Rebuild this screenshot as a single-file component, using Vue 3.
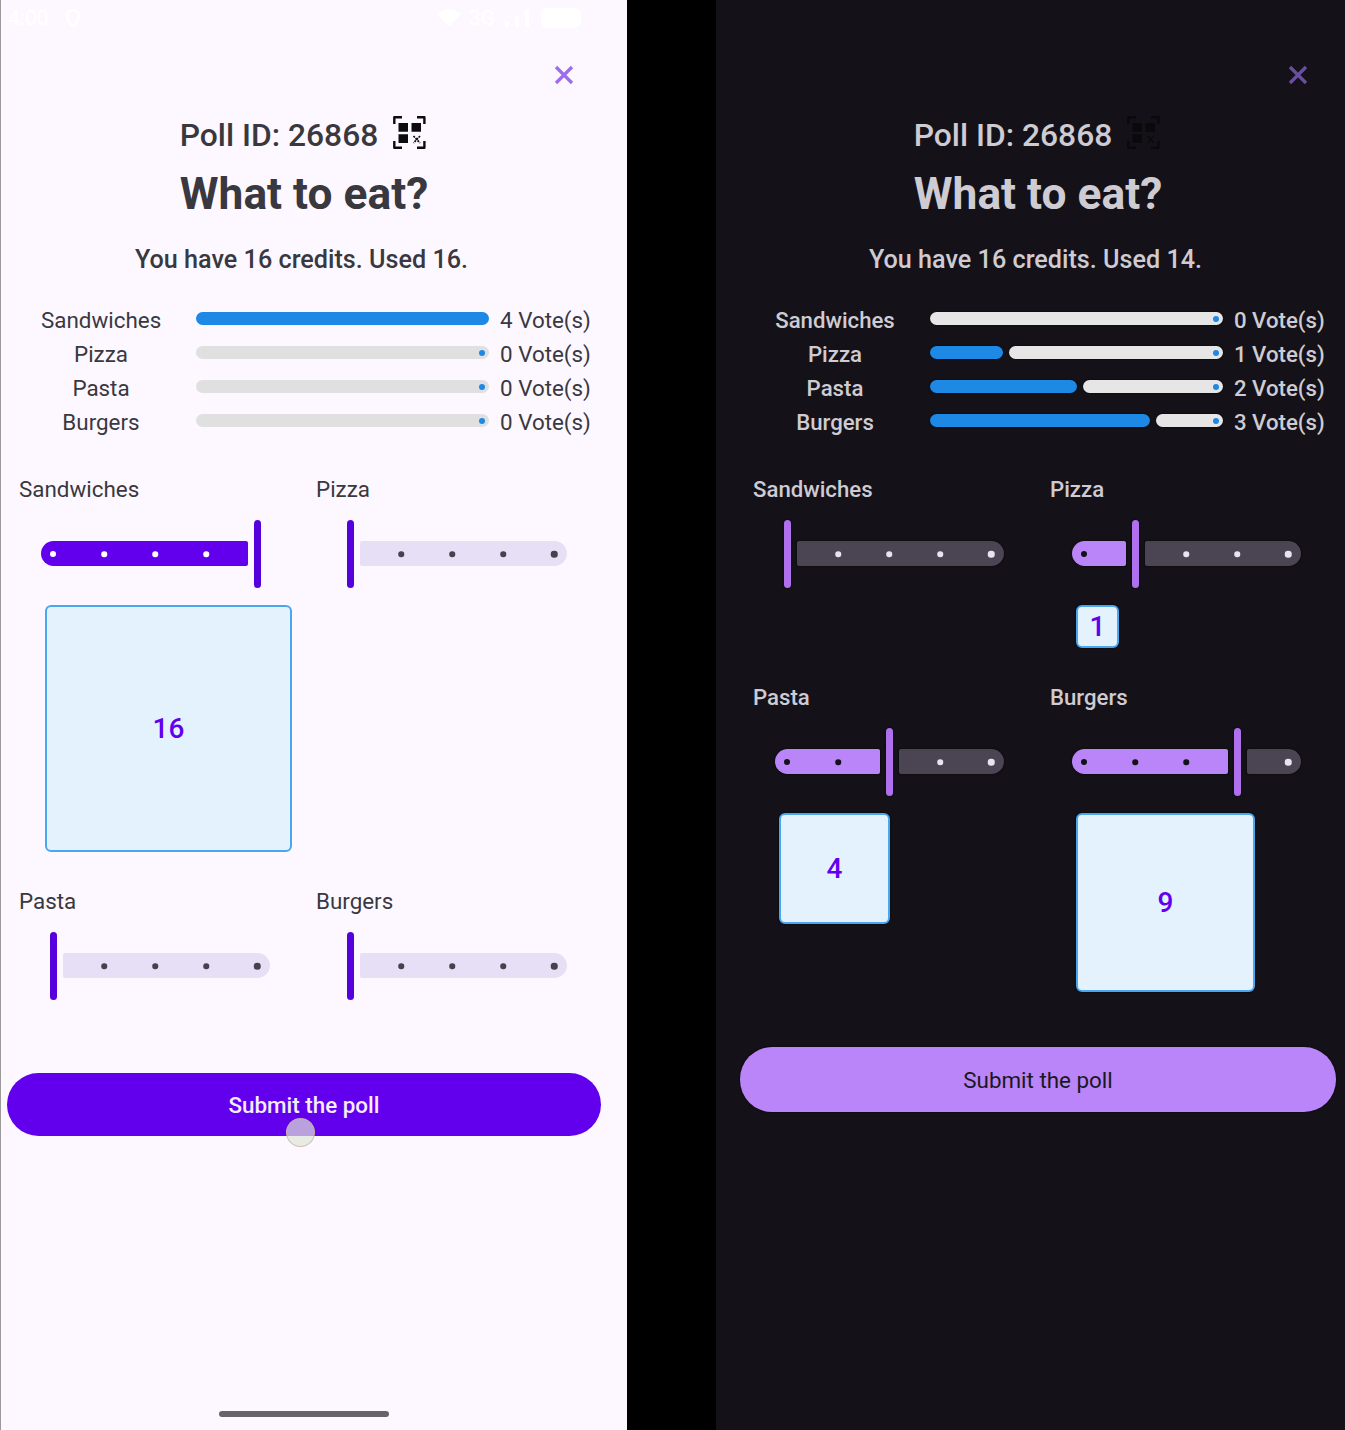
<script setup>
const choices = ['Sandwiches', 'Pizza', 'Pasta', 'Burgers']
const screens = [
  { theme: 'light', votes: [4, 0, 0, 0], chrome: true },
  { theme: 'dark', votes: [0, 1, 2, 3], chrome: false },
]
const usedCredits = (votes) => votes.reduce((sum, v) => sum + v * v, 0)
const boxSize = (v) => 68 * v - 25
const qrCorners = ['M1.3 8V1.3H9', 'M24 1.3h7.4V8', 'M1.3 25v6.7H9', 'M24 31.7h7.4V25']
</script>

<template>
  <div class="page">
    <section v-for="screen in screens" :key="screen.theme" class="screen" :class="screen.theme">
      <div v-if="screen.chrome" class="status">
        <span class="clock">4:00</span>
        <svg class="shield" viewBox="0 0 20 24" width="16" height="20">
          <path d="M10 2l7 3v6c0 5-3 8-7 11-4-3-7-6-7-11V5z" fill="none" stroke="currentColor" stroke-width="3" />
        </svg>
        <span class="status-right">
          <svg viewBox="0 0 24 18" width="24" height="18">
            <path d="M12 17L0 5c7-6 17-6 24 0z" fill="currentColor" />
          </svg>
          <span class="net">3G</span>
          <svg viewBox="0 0 30 20" width="30" height="20">
            <path d="M2 14h4v5H2zM12 8h4v11h-4zM22 1h4v18h-4z" fill="currentColor" />
          </svg>
          <span class="battery"></span>
        </span>
      </div>
      <div class="content">
        <header class="close-row">
          <svg class="close" viewBox="0 0 20 20" width="20" height="20">
            <path d="M2 2l16 16M18 2L2 18" fill="none" stroke="currentColor" stroke-width="3.2" />
          </svg>
        </header>
        <div class="poll-id">
          <span>Poll ID: 26868</span>
          <svg class="qr" viewBox="0 0 33 33" width="33" height="33">
            <path v-for="d in qrCorners" :key="d" :d="d" fill="none" stroke="currentColor" stroke-width="2.4" stroke-linejoin="round" />
            <path d="M5.5 7h9.5v8.7H5.5zM18.5 7H28v8.7h-9.5zM5.5 18.3h9.5V27H5.5z" fill="currentColor" />
            <path d="M20.5 20l6.5 7M27 20l-6.5 7" fill="none" stroke="currentColor" stroke-width="1.7" stroke-dasharray="2 1" />
          </svg>
        </div>
        <h1 class="title">What to eat?</h1>
        <p class="credits">You have 16 credits. Used {{ usedCredits(screen.votes) }}.</p>

        <ul class="results">
          <li v-for="(name, i) in choices" :key="name" class="result">
            <span class="result-name">{{ name }}</span>
            <span class="bar">
              <span v-if="screen.votes[i]" class="bar-fill" :style="{ width: screen.votes[i] * 73.25 + 'px' }"></span>
              <span v-if="screen.votes[i] < 4" class="bar-track"><i class="bar-stop"></i></span>
            </span>
            <span class="result-votes">{{ screen.votes[i] }} Vote(s)</span>
          </li>
        </ul>

        <div class="sliders">
          <div v-for="(name, i) in choices" :key="name" class="choice">
            <div class="choice-name">{{ name }}</div>
            <div class="slider">
              <span class="track-on" :class="{ empty: !screen.votes[i] }" :style="{ width: 2.5 + 51 * screen.votes[i] + 'px' }"></span>
              <span class="thumb"></span>
              <span v-if="screen.votes[i] < 4" class="track-off"></span>
              <template v-for="k in 5" :key="k">
                <i
                  v-if="k - 1 !== screen.votes[i]"
                  class="tick"
                  :class="{ on: k - 1 < screen.votes[i], end: k === 5, start: k === 1 }"
                  :style="{ left: 12 + 51 * (k - 1) + 'px' }"
                ></i>
              </template>
            </div>
            <div class="box-slot">
              <div
                v-if="screen.votes[i]"
                class="box"
                :style="{ width: boxSize(screen.votes[i]) + 'px', height: boxSize(screen.votes[i]) + 'px' }"
              >{{ screen.votes[i] * screen.votes[i] }}</div>
            </div>
          </div>
        </div>

        <button class="submit" type="button">
          Submit the poll
          <i v-if="screen.chrome" class="touch"></i>
        </button>
        <div v-if="screen.chrome" class="home"></div>
      </div>
    </section>
  </div>
</template>

<style>
html, body { margin: 0; background: #000; }
</style>

<style scoped>
.page {
  display: flex;
  justify-content: space-between;
  width: 1345px;
  height: 1430px;
  overflow: hidden;
  background: #000;
  font-family: Roboto, "Liberation Sans", sans-serif;
}
.screen {
  position: relative;
  display: flex;
  flex-direction: column;
  height: 1430px;
  box-sizing: border-box;
  background: var(--bg);
  color: var(--text);
}
.light {
  width: 627px;
  box-shadow: inset 1px 0 #9a9a9a;
  --bg: #fdf8ff;
  --text: #3a383f;
  --close: #9d6ce8;
  --qr: #0c0c0e;
  --bar-track: #e0e0e0;
  --thumb: #5600dc;
  --on: #6200ee;
  --off: #e7dff6;
  --tick-off: #45424e;
  --tick-on: #fff;
  --btn: #6200ee;
  --btn-text: #f6ecff;
  --btn-weight: 500;
  --btn-h: 63px;
  --btn-w: 594px;
  --btn-x: 7px;
  --btn-gap: 56px;
  --halo: transparent;
  --top: 26px;
  --label-weight: 400;
  --label-size: 22.4px;
}
.dark {
  width: 629px;
  padding-left: 18px;
  --bg: #141218;
  --text: #cfcbd3;
  --close: #6a4ea2;
  --qr: #0a090c;
  --bar-track: #e6e6e6;
  --thumb: #b070ee;
  --on: #b985f9;
  --off: #4a4453;
  --tick-off: #e8e3ee;
  --tick-on: #141218;
  --btn: #b985f9;
  --btn-text: #1b1720;
  --btn-weight: 400;
  --btn-h: 65px;
  --btn-w: 596px;
  --btn-x: 6px;
  --btn-gap: 55px;
  --halo: #000;
  --top: 62px;
  --label-weight: 500;
  --label-size: 22.2px;
}
.status {
  display: flex;
  align-items: center;
  height: 36px;
  padding: 0 46px 0 8px;
  color: #fff;
  font-size: 21px;
}
.shield { margin-left: 16px; }
.status-right { display: flex; align-items: center; gap: 8px; margin-left: auto; }
.battery { width: 40px; height: 20px; border-radius: 7px; background: #fff; }
.content {
  display: flex;
  flex: 1;
  flex-direction: column;
  width: 608px;
  padding-top: var(--top);
  min-height: 0;
}
.close-row { display: flex; justify-content: flex-end; height: 26px; padding-right: 34px; align-items: center; }
.close { color: var(--close); }
.poll-id {
  display: flex;
  align-items: center;
  justify-content: center;
  gap: 15px;
  height: 40px;
  margin: 27px 2px 0 0;
  font-size: 31.8px;
  font-weight: 500;
}
.qr { color: var(--qr); margin-top: -6px; }
.title {
  margin: 13px 0 0;
  height: 52px;
  font-size: 44.3px;
  line-height: 52px;
  font-weight: 700;
  text-align: center;
}
.credits {
  margin: 24px 5px 0 0;
  height: 32px;
  font-size: 25.2px;
  line-height: 32px;
  font-weight: 500;
  text-align: center;
}
.results { list-style: none; margin: 27px 0 0; padding: 0 0 0 41px; }
.result {
  display: flex;
  align-items: center;
  height: 34px;
  font-size: var(--label-size);
  font-weight: var(--label-weight);
}
.result-name { width: 120px; margin-right: 35px; text-align: center; white-space: nowrap; }
.bar { display: flex; gap: 6px; width: 293px; height: 13px; margin-bottom: 3px; }
.bar-fill { border-radius: 7px; background: #1e88e5; box-shadow: 0 0 2px var(--halo); }
.bar-track {
  position: relative;
  flex: 1;
  border-radius: 7px;
  background: var(--bar-track);
  box-shadow: 0 0 2px var(--halo);
}
.bar-stop {
  position: absolute;
  top: 3.5px;
  right: 4px;
  width: 6px;
  height: 6px;
  border-radius: 50%;
  background: #1e88e5;
}
.result-votes { margin-left: 11px; white-space: nowrap; }
.sliders {
  display: grid;
  grid-template-columns: 297px 297px;
  row-gap: 36px;
  margin-top: 37px;
  padding-left: 19px;
}
.choice-name {
  height: 28px;
  font-size: var(--label-size);
  font-weight: var(--label-weight);
  line-height: 26px;
}
.slider {
  position: relative;
  display: flex;
  align-items: center;
  gap: 6px;
  width: 229px;
  height: 68px;
  margin: 16px 0 0 22px;
}
.track-on {
  height: 25px;
  margin-top: -1px;
  border-radius: 12.5px 2px 2px 12.5px;
  background: var(--on);
  box-shadow: 0 0 2px var(--halo);
}
.track-on.empty { background: transparent; box-shadow: none; }
.thumb {
  flex: none;
  width: 7px;
  height: 68px;
  border-radius: 4px;
  background: var(--thumb);
  box-shadow: 0 0 2px var(--halo);
}
.track-off {
  flex: 1;
  height: 25px;
  margin-top: -1px;
  border-radius: 2px 12.5px 12.5px 2px;
  background: var(--off);
  box-shadow: 0 0 2px var(--halo);
}
.tick {
  position: absolute;
  top: 34px;
  width: 5.5px;
  height: 5.5px;
  border-radius: 50%;
  background: var(--tick-off);
  transform: translate(-50%, -50%);
}
.tick.on { background: var(--tick-on); }
.tick.start { width: 6px; height: 6px; }
.tick.end { width: 6.5px; height: 6.5px; }
.box-slot { margin: 17px 0 0 26px; }
.box {
  display: flex;
  align-items: center;
  justify-content: center;
  box-sizing: border-box;
  border: 2px solid #4aa6ee;
  border-radius: 6px;
  background: #e3f2fd;
  box-shadow: 0 0 2px var(--halo);
  color: #6200ee;
  font-size: 28px;
  font-weight: 500;
}
.submit {
  position: relative;
  flex: none;
  display: block;
  width: var(--btn-w);
  height: var(--btn-h);
  margin: var(--btn-gap) 0 0 var(--btn-x);
  padding: 0;
  border: 0;
  border-radius: 32px;
  background: var(--btn);
  color: var(--btn-text);
  font: var(--btn-weight) 22.4px Roboto, "Liberation Sans", sans-serif;
  box-shadow: 0 0 2px var(--halo);
}
.touch {
  position: absolute;
  left: 279px;
  top: 45px;
  box-sizing: border-box;
  width: 29px;
  height: 29px;
  border: 1.5px solid rgba(205, 180, 160, 0.8);
  border-radius: 50%;
  background: rgba(222, 229, 215, 0.7);
}
.home {
  flex: none;
  width: 170px;
  height: 6px;
  margin: auto 0 13px 219px;
  border-radius: 3px;
  background: #666469;
}
</style>
